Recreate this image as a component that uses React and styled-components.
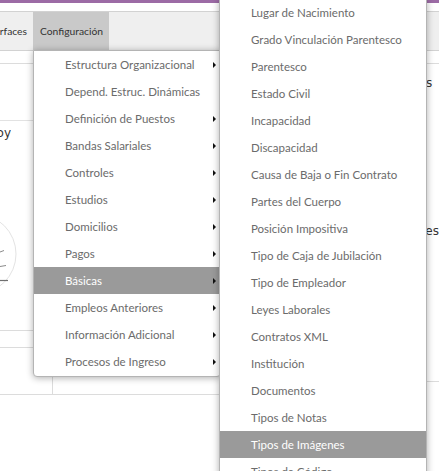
import React from 'react';
import styled, { createGlobalStyle } from 'styled-components';

const GlobalStyle = createGlobalStyle`
  html, body {
    margin: 0;
    padding: 0;
    background: #fff;
    overflow: hidden;
  }
  body {
    font-family: "Lato", "Liberation Sans", sans-serif;
  }
`;

const Page = styled.div`
  position: relative;
  width: 439px;
  height: 471px;
  overflow: hidden;
  display: flex;
  flex-direction: column;
`;

const TopStrip = styled.div`
  height: 3px;
  background: #9c6ba5;
  margin-bottom: 8px;
`;

const MenuBar = styled.div`
  height: 38px;
  border-top: 1px solid #d2d2d2;
  border-bottom: 1px solid #d2d2d2;
  background: #efefef;
  display: flex;
`;

const BarItem = styled.div`
  display: flex;
  align-items: center;
  justify-content: flex-end;
  padding: 0 6px 0 7px;
  white-space: nowrap;
  overflow: hidden;
  font-size: 10.3px;
  color: #333;
  background: ${({ $open }) => ($open ? '#c9c9c9' : 'transparent')};
  width: ${({ $width }) => ($width ? `${$width}px` : 'auto')};
  box-sizing: border-box;
`;

const Content = styled.div`
  flex: 1;
  display: flex;
`;

const LeftPanel = styled.div`
  width: 427px;
  display: flex;
  flex-direction: column;
`;

const RightPanel = styled.div`
  flex: 1;
  display: flex;
  flex-direction: column;
`;

const Row = styled.div`
  height: ${({ $h }) => $h}px;
  border-bottom: 1px solid ${({ $line }) => $line || '#dcdcdc'};
  margin-top: ${({ $top }) => $top || 0}px;
  display: flex;
  flex-shrink: 0;
`;

const Cell = styled.div`
  width: ${({ $w }) => ($w ? `${$w}px` : 'auto')};
  flex: ${({ $w }) => ($w ? 'none' : 1)};
  border-right: ${({ $divider }) => ($divider ? '1px solid #dcdcdc' : 'none')};
`;

const Widget = styled.div`
  height: 209px;
  border-bottom: 1px solid #dcdcdc;
  display: flex;
  flex-direction: column;
  flex-shrink: 0;
`;

const ClippedText = styled.div`
  width: ${({ $w }) => $w}px;
  display: flex;
  justify-content: flex-end;
  overflow: hidden;
  white-space: nowrap;
  font-family: "DejaVu Sans", sans-serif;
  font-size: 12px;
  line-height: 14px;
  color: #333;
  margin-top: ${({ $top }) => $top}px;
`;

const PanelText = styled.div`
  font-family: "DejaVu Sans", sans-serif;
  font-size: 12px;
  color: #333;
  white-space: nowrap;
  margin-top: ${({ $top }) => $top}px;
`;

const Gauge = styled.svg`
  display: block;
  margin-top: 74px;
`;

const Dropdown = styled.ul`
  position: absolute;
  left: ${({ $left }) => $left}px;
  top: ${({ $top }) => $top}px;
  width: ${({ $width }) => $width}px;
  box-sizing: border-box;
  margin: 0;
  padding: 0 0 1px;
  list-style: none;
  background: #fff;
  border: 1px solid #b4b4b4;
  border-radius: 0 0 4px 4px;
  box-shadow: 0 1px 7px rgba(0, 0, 0, 0.32);
`;

const MenuItem = styled.li`
  height: 27px;
  display: flex;
  align-items: center;
  padding: 0 4px 0 31px;
  font-size: 11.5px;
  white-space: nowrap;
  color: ${({ $active }) => ($active ? '#fff' : '#6b6b6b')};
  background: ${({ $active }) => ($active ? '#9a9a9a' : 'transparent')};
`;

const Caret = styled.span`
  margin-left: auto;
  width: 0;
  height: 0;
  border-top: 3px solid transparent;
  border-bottom: 3px solid transparent;
  border-left: 3px solid #111;
`;

const configItems = [
  { label: 'Estructura Organizacional', sub: true },
  { label: 'Depend. Estruc. Dinámicas' },
  { label: 'Definición de Puestos', sub: true },
  { label: 'Bandas Salariales', sub: true },
  { label: 'Controles', sub: true },
  { label: 'Estudios', sub: true },
  { label: 'Domicilios', sub: true },
  { label: 'Pagos', sub: true },
  { label: 'Básicas', sub: true, active: true },
  { label: 'Empleos Anteriores', sub: true },
  { label: 'Información Adicional', sub: true },
  { label: 'Procesos de Ingreso', sub: true },
];

const basicItems = [
  'Lugar de Nacimiento',
  'Grado Vinculación Parentesco',
  'Parentesco',
  'Estado Civil',
  'Incapacidad',
  'Discapacidad',
  'Causa de Baja o Fin Contrato',
  'Partes del Cuerpo',
  'Posición Impositiva',
  'Tipo de Caja de Jubilación',
  'Tipo de Empleador',
  'Leyes Laborales',
  'Contratos XML',
  'Institución',
  'Documentos',
  'Tipos de Notas',
  'Tipos de Imágenes',
  'Tipos de Código',
];

const App = () => (
  <>
    <GlobalStyle />
    <Page>
      <TopStrip />
      <MenuBar>
        <BarItem $width={33}>Interfaces</BarItem>
        <BarItem $open>Configuración</BarItem>
      </MenuBar>
      <Content>
        <LeftPanel>
          <Row $h={12} />
          <Row $h={56} $line="#e2e2e2" />
          <Widget>
            <ClippedText $w={11} $top={5}>Hoy</ClippedText>
            <Gauge width="20" height="82" viewBox="0 0 20 82">
              {/* edge of a donut chart, mostly scrolled out of view */}
              <path d="M -24 0 A 40 40 0 0 1 -24 80" fill="none" stroke="#e3e3e3" strokeWidth="1" />
              <line x1="0" y1="38" x2="4" y2="36.5" stroke="#8a8a8a" strokeWidth="1" />
              <line x1="0" y1="52.5" x2="6" y2="51.5" stroke="#8a8a8a" strokeWidth="1" />
              <line x1="0" y1="66.5" x2="8" y2="66.5" stroke="#6f6f6f" strokeWidth="1.2" />
            </Gauge>
          </Widget>
          <Row $h={16} />
          <Row $h={46}>
            <Cell $w={52} $divider />
            <Cell />
          </Row>
        </LeftPanel>
        <RightPanel>
          <Row $h={12} />
          <PanelText $top={12}>os</PanelText>
          <PanelText $top={134}>ces</PanelText>
          <Row $h={0} $top={143} />
        </RightPanel>
      </Content>

      <Dropdown $left={33} $top={50} $width={188}>
        {configItems.map((item) => (
          <MenuItem key={item.label} $active={item.active}>
            {item.label}
            {item.sub && <Caret />}
          </MenuItem>
        ))}
      </Dropdown>

      <Dropdown $left={219} $top={-2} $width={208}>
        {basicItems.map((label) => (
          <MenuItem key={label} $active={label === 'Tipos de Imágenes'}>
            {label}
          </MenuItem>
        ))}
      </Dropdown>
    </Page>
  </>
);

export default App;
